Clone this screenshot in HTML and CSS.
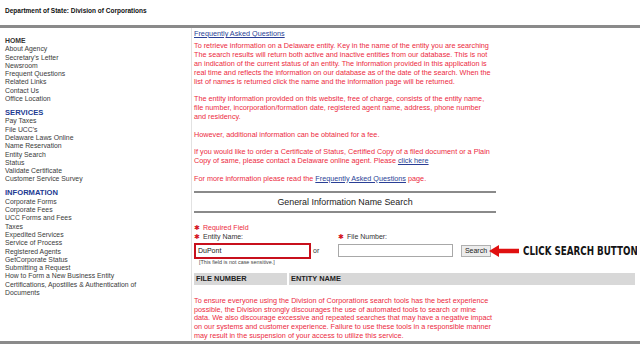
FILE: index.html
```html
<!DOCTYPE html>
<html>
<head>
<meta charset="utf-8">
<link rel="stylesheet" href="styles.css">
</head>
<body>
<header class="top">Department of State: Division of Corporations</header>
<div class="bar"></div>
<div class="wrap">
  <nav class="side">
    <div class="grp">
      <div class="home">HOME</div>
      <a>About Agency</a>
      <a>Secretary's Letter</a>
      <a>Newsroom</a>
      <a>Frequent Questions</a>
      <a>Related Links</a>
      <a>Contact Us</a>
      <a>Office Location</a>
    </div>
    <div class="grp">
      <div class="hd">SERVICES</div>
      <a>Pay Taxes</a>
      <a>File UCC's</a>
      <a>Delaware Laws Online</a>
      <a>Name Reservation</a>
      <a>Entity Search</a>
      <a>Status</a>
      <a>Validate Certificate</a>
      <a>Customer Service Survey</a>
    </div>
    <div class="grp">
      <div class="hd">INFORMATION</div>
      <a>Corporate Forms</a>
      <a>Corporate Fees</a>
      <a>UCC Forms and Fees</a>
      <a>Taxes</a>
      <a>Expedited Services</a>
      <a>Service of Process</a>
      <a>Registered Agents</a>
      <a>GetCorporate Status</a>
      <a>Submitting a Request</a>
      <a>How to Form a New Business Entity</a>
      <a>Certifications, Apostilles &amp; Authentication of Documents</a>
    </div>
  </nav>
  <main class="main">
    <div class="col">
      <a class="link faq">Frequently Asked Questions</a>
      <p class="red">To retrieve information on a Delaware entity. Key in the name of the entity you are searching The search results will return both active and inactive entities from our database. This is not an indication of the current status of an entity. The information provided in this application is real time and reflects the information on our database as of the date of the search. When the list of names is returned click the name and the information page will be returned.</p>
      <p class="red">The entity information provided on this website, free of charge, consists of the entity name, file number, incorporation/formation date, registered agent name, address, phone number and residency.</p>
      <p class="red">However, additional information can be obtained for a fee.</p>
      <p class="red">If you would like to order a Certificate of Status, Certified Copy of a filed document or a Plain Copy of same, please contact a Delaware online agent. Please <a class="link">click here</a></p>
      <p class="red">For more information please read the <a class="link">Frequently Asked Questions</a> page.</p>
      <div class="title">General Information Name Search</div>
    </div>
    <div class="form">
      <div class="req"><span class="star">✱</span>Required Field</div>
      <div class="fields">
        <div class="fld first">
          <div class="lbl"><span class="star">✱</span>Entity Name:</div>
          <div class="inrow">
            <div class="inp name">DuPont</div>
            <span class="or">or</span>
          </div>
          <div class="note">[This field is not case sensitive.]</div>
        </div>
        <div class="fld">
          <div class="lbl"><span class="star">✱</span>File Number:</div>
          <div class="inrow">
            <div class="inp num"></div>
            <div class="btn">Search</div>
            <svg class="arrow" width="30" height="12" viewBox="0 0 30 12"><path d="M0 6 L10 0 L10 3.8 L30 3.8 L30 8.2 L10 8.2 L10 12 Z" fill="#e01010"/></svg>
            <span class="callout"><span class="ct">CLICK SEARCH BUTTON</span></span>
          </div>
        </div>
      </div>
    </div>
    <div class="thead">
      <div class="th c1">FILE NUMBER</div>
      <div class="th c2">ENTITY NAME</div>
    </div>
    <div class="col wide">
      <p class="red last">To ensure everyone using the Division of Corporations search tools has the best experience possible, the Division strongly discourages the use of automated tools to search or mine data. We also discourage excessive and repeated searches that may have a negative impact on our systems and customer experience. Failure to use these tools in a responsible manner may result in the suspension of your access to utilize this service.</p>
    </div>
  </main>
</div>
<div class="foot"></div>
</body>
</html>
```
FILE: styles.css
```css
html, body { margin: 0; padding: 0; }
body {
  width: 640px; height: 344px; overflow: hidden; position: relative;
  font-family: "Liberation Sans", Arial, sans-serif;
  background: #fff; color: #333;
}
.top {
  height: 25px; box-sizing: border-box; padding: 6px 0 0 5px;
  font-size: 6.5px; font-weight: bold; color: #111; line-height: 9px;
}
.bar { height: 3px; background: #8a8a8a; }
.wrap { display: flex; height: 312px; }
.side {
  width: 186px; padding: 9px 0 0 5px; border-right: 1px solid #e2e2e2;
  font-size: 6.85px; line-height: 8.3px; flex-shrink: 0; box-sizing: content-box;
}
.side .grp { width: 150px; }
.side a { display: block; color: #3a3a3a; }
.grp { margin-bottom: 5.7px; }
.home { font-weight: bold; color: #333; }
.hd { font-weight: bold; color: #1c3a92; font-size: 7.6px; }
.main { padding: 1px 0 0 2px; width: 440px; }
.col { width: 298px; }
.col.wide { width: 300px; }
.red, .link { font-size: 7.25px; line-height: 9px; }
.red { color: #ec2a3e; margin: 0 0 8.4px; }
.link { color: #2a3f96; text-decoration: underline; }
.faq { display: block; margin-bottom: 3px; }
.title {
  border-top: 2px solid #8a8a8a; border-bottom: 2px solid #8a8a8a;
  margin-top: 2px; width: 302px;
  height: 18px; line-height: 18px; text-align: center;
  font-size: 8.9px; color: #222;
}
.form { padding-top: 10px; font-size: 7px; }
.req { color: #ec2a3e; line-height: 9.5px; }
.star { color: #d4141e; font-size: 7px; margin-right: 3px; }
.fields { display: flex; }
.fld { display: flex; flex-direction: column; }
.fld.first { width: 144px; flex-shrink: 0; }
.lbl { color: #333; line-height: 9.5px; }
.inrow { display: flex; align-items: center; height: 16px; margin-top: 1px; }
.inp { box-sizing: border-box; background: #fff; font-size: 7px; line-height: 11px; flex-shrink: 0; }
.name { width: 117px; height: 16px; border: 2px solid #c8101c; padding-left: 2px; color: #111; }
.or { margin-left: 2px; color: #333; }
.num { width: 115px; height: 13px; border: 1px solid #a8a8a8; }
.btn {
  margin-left: 8px; width: 30px; height: 12px; box-sizing: border-box; flex-shrink: 0;
  border: 1px solid #b0b0b0; background: #ececec;
  font-size: 7px; line-height: 10px; text-align: center; color: #222;
}
.arrow { flex-shrink: 0; margin-left: -2px; }
.callout { display: block; width: 114px; margin-left: 4px; flex-shrink: 0; overflow: hidden; }
.ct {
  display: inline-block;
  font-family: "DejaVu Sans", sans-serif;
  font-weight: bold; font-size: 12.5px; color: #151515; white-space: nowrap;
  transform: scaleX(0.7); transform-origin: left center;
}
.note { font-size: 5.4px; color: #444; padding-left: 5px; line-height: 7px; }
.thead { display: flex; gap: 2px; margin-top: 7px; width: 441px; height: 12px; }
.th { background: #d8d8d8; font-weight: bold; font-size: 7.4px; line-height: 12px; color: #222; padding-left: 2px; }
.c1 { width: 91px; }
.c2 { flex: 1; }
.last { margin-top: 12px; line-height: 8.7px; }
.foot { position: absolute; left: 0; right: 0; bottom: 0; height: 3px; background: #8a8a8a; }
```
